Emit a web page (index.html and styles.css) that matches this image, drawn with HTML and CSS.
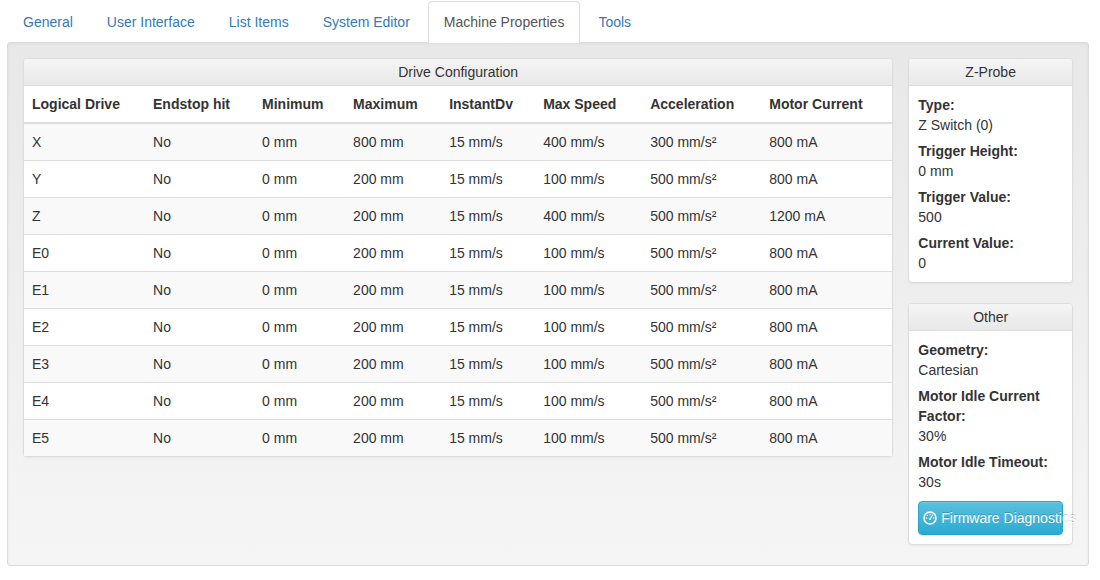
FILE: index.html
```html
<!DOCTYPE html>
<html lang="en">
<head>
<meta charset="utf-8">
<title>Machine Properties</title>
<link rel="stylesheet" href="styles.css">
</head>
<body>
<nav class="tabs">
  <a class="tab" href="#general">General</a>
  <a class="tab" href="#interface">User Interface</a>
  <a class="tab" href="#items">List Items</a>
  <a class="tab" href="#editor">System Editor</a>
  <a class="tab active" href="#machine" aria-current="page">Machine Properties</a>
  <a class="tab" href="#tools">Tools</a>
</nav>
<main class="well">
  <section class="panel drives">
    <h2 class="panel-heading">Drive Configuration</h2>
    <table class="table">
      <colgroup>
        <col class="col-drive"><col class="col-endstop"><col class="col-min"><col class="col-max"><col class="col-instant"><col class="col-speed"><col class="col-accel"><col class="col-current">
      </colgroup>
      <thead>
        <tr><th>Logical Drive</th><th>Endstop hit</th><th>Minimum</th><th>Maximum</th><th>InstantDv</th><th>Max Speed</th><th>Acceleration</th><th>Motor Current</th></tr>
      </thead>
      <tbody>
        <tr><td>X</td><td>No</td><td>0 mm</td><td>800 mm</td><td>15 mm/s</td><td>400 mm/s</td><td>300 mm/s²</td><td>800 mA</td></tr>
        <tr><td>Y</td><td>No</td><td>0 mm</td><td>200 mm</td><td>15 mm/s</td><td>100 mm/s</td><td>500 mm/s²</td><td>800 mA</td></tr>
        <tr><td>Z</td><td>No</td><td>0 mm</td><td>200 mm</td><td>15 mm/s</td><td>400 mm/s</td><td>500 mm/s²</td><td>1200 mA</td></tr>
        <tr><td>E0</td><td>No</td><td>0 mm</td><td>200 mm</td><td>15 mm/s</td><td>100 mm/s</td><td>500 mm/s²</td><td>800 mA</td></tr>
        <tr><td>E1</td><td>No</td><td>0 mm</td><td>200 mm</td><td>15 mm/s</td><td>100 mm/s</td><td>500 mm/s²</td><td>800 mA</td></tr>
        <tr><td>E2</td><td>No</td><td>0 mm</td><td>200 mm</td><td>15 mm/s</td><td>100 mm/s</td><td>500 mm/s²</td><td>800 mA</td></tr>
        <tr><td>E3</td><td>No</td><td>0 mm</td><td>200 mm</td><td>15 mm/s</td><td>100 mm/s</td><td>500 mm/s²</td><td>800 mA</td></tr>
        <tr><td>E4</td><td>No</td><td>0 mm</td><td>200 mm</td><td>15 mm/s</td><td>100 mm/s</td><td>500 mm/s²</td><td>800 mA</td></tr>
        <tr><td>E5</td><td>No</td><td>0 mm</td><td>200 mm</td><td>15 mm/s</td><td>100 mm/s</td><td>500 mm/s²</td><td>800 mA</td></tr>
      </tbody>
    </table>
  </section>
  <aside class="sidebar">
    <section class="panel">
      <h2 class="panel-heading">Z-Probe</h2>
      <div class="panel-body">
        <dl class="facts">
          <div><dt>Type:</dt><dd>Z Switch (0)</dd></div>
          <div><dt>Trigger Height:</dt><dd>0 mm</dd></div>
          <div><dt>Trigger Value:</dt><dd>500</dd></div>
          <div><dt>Current Value:</dt><dd>0</dd></div>
        </dl>
      </div>
    </section>
    <section class="panel">
      <h2 class="panel-heading">Other</h2>
      <div class="panel-body">
        <dl class="facts">
          <div><dt>Geometry:</dt><dd>Cartesian</dd></div>
          <div><dt>Motor Idle Current Factor:</dt><dd>30%</dd></div>
          <div><dt>Motor Idle Timeout:</dt><dd>30s</dd></div>
        </dl>
        <button class="btn" type="button">
          <svg class="icon" viewBox="0 0 14 14" aria-hidden="true">
            <circle cx="7" cy="7" r="6" fill="none" stroke="currentColor" stroke-width="1.6"/>
            <g fill="currentColor"><circle cx="3.4" cy="7" r=".7"/><circle cx="4.5" cy="4.4" r=".7"/><circle cx="7" cy="3.4" r=".7"/><circle cx="10.7" cy="7" r=".7"/></g>
            <path d="M9.8 3.7 7.2 7.6" fill="none" stroke="currentColor" stroke-width="1.1"/>
            <circle cx="7" cy="8" r="1.1" fill="currentColor"/>
          </svg>
          <span>Firmware Diagnostics</span>
        </button>
      </div>
    </section>
  </aside>
</main>
</body>
</html>
```
FILE: styles.css
```css
* { box-sizing: border-box; }

body {
  margin: 0;
  padding: 1px 11px 0 7px;
  background: #fff;
  color: #333;
  font: 14px/20px "Helvetica Neue", "Liberation Sans", Arial, sans-serif;
}

.tabs {
  display: flex;
  gap: 2px;
}

.tab {
  padding: 10px 15px;
  border: 1px solid transparent;
  border-bottom: 0;
  border-radius: 4px 4px 0 0;
  color: #337ab7;
  text-decoration: none;
  white-space: nowrap;
}

.tab.active {
  position: relative;
  z-index: 1;
  margin-bottom: -1px;
  padding-bottom: 11px;
  border-color: #ddd;
  background: #fff;
  color: #555;
}

.well {
  display: flex;
  align-items: flex-start;
  gap: 15px;
  padding: 15px 15px 0;
  border: 1px solid #dcdcdc;
  border-radius: 3px;
  background: linear-gradient(#e8e8e8, #f5f5f5);
  box-shadow: inset 0 1px 3px rgba(0, 0, 0, .05), 0 1px 0 rgba(255, 255, 255, .1);
}

.drives { flex: 870 1 0; min-width: 0; }
.sidebar { flex: 165 1 0; min-width: 0; }

.panel {
  margin-bottom: 20px;
  border: 1px solid #ddd;
  border-radius: 4px;
  background: #fff;
  box-shadow: 0 1px 2px rgba(0, 0, 0, .05);
}

.panel-heading {
  margin: 0;
  padding: 3px 8px;
  border-bottom: 1px solid #ddd;
  border-radius: 3px 3px 0 0;
  background: linear-gradient(#f5f5f5, #e8e8e8);
  font-size: 14px;
  font-weight: 400;
  text-align: center;
}

.panel-body { padding: 9px; }

.table {
  width: 100%;
  table-layout: fixed;
  border-spacing: 0;
}

.col-drive { width: 121px; }
.col-endstop { width: 109px; }
.col-min { width: 91px; }
.col-max { width: 96px; }
.col-instant { width: 94px; }
.col-speed { width: 107px; }
.col-accel { width: 119px; }
.col-current { width: 131px; }

.table th,
.table td {
  padding: 8px;
  text-align: left;
  white-space: nowrap;
}

.table th { border-bottom: 2px solid #ddd; }
.table tr + tr td { border-top: 1px solid #ddd; }
.table tbody tr:nth-child(odd) { background: #f9f9f9; }

.facts {
  display: grid;
  gap: 6px;
  margin: 0;
}

.facts dt { font-weight: 700; }
.facts dd { margin: 0; }

.btn {
  display: flex;
  align-items: center;
  gap: 4px;
  width: 100%;
  margin-top: 9px;
  padding: 6px 4px;
  border: 1px solid #28a4c9;
  border-radius: 4px;
  background: linear-gradient(#5bc0de, #2aabd2);
  box-shadow: inset 0 1px 0 rgba(255, 255, 255, .15), 0 1px 1px rgba(0, 0, 0, .075);
  color: #fff;
  font: inherit;
  text-shadow: 0 -1px 0 rgba(0, 0, 0, .2);
  white-space: nowrap;
}

.icon {
  flex: none;
  width: 14px;
  height: 14px;
}
```
